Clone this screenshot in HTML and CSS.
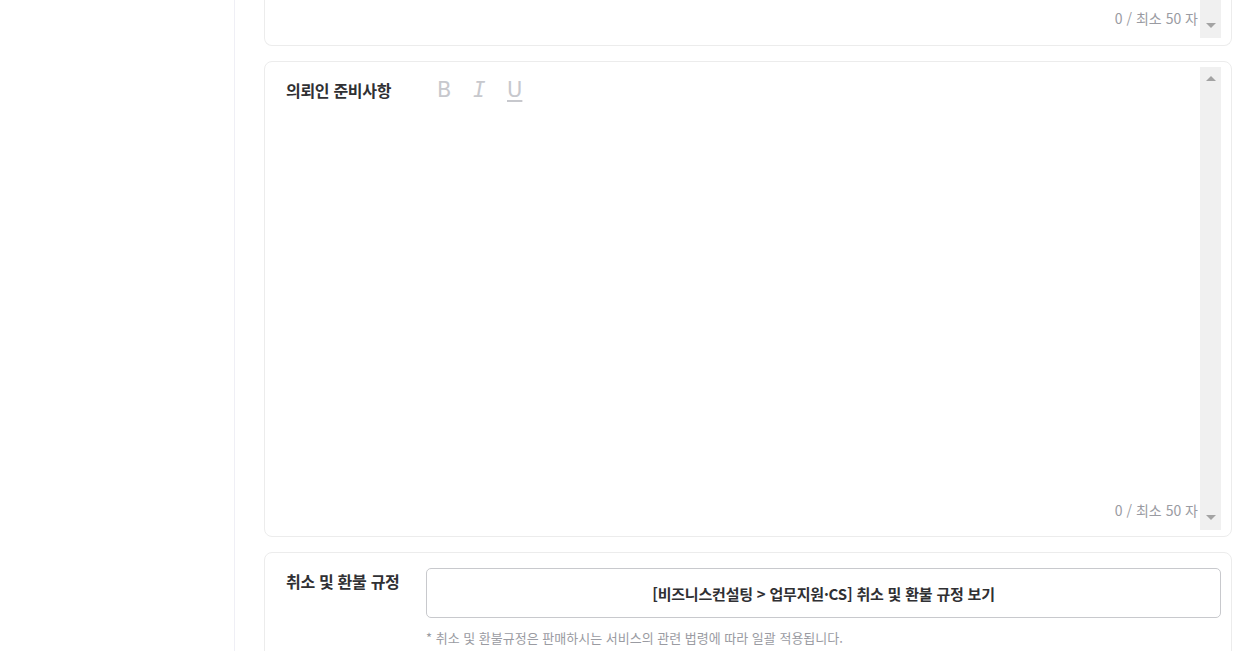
FILE: index.html
```html
<!DOCTYPE html>
<html lang="ko">
<head>
<meta charset="utf-8">
<title>의뢰인 준비사항</title>
<link rel="stylesheet" href="styles.css">
</head>
<body>
<div class="layout">
  <aside class="sidebar"></aside>
  <main class="main">
    <section class="card card-cont">
      <div class="field-row">
        <div class="editor-body editor-short">
          <div class="counter">0 / 최소 50 자</div>
        </div>
        <div class="scrollbar">
          <span class="arrow arrow-down"></span>
        </div>
      </div>
    </section>

    <section class="card card-editor">
      <div class="field-row">
        <div class="label">의뢰인 준비사항</div>
        <div class="editor-body editor-tall">
          <div class="toolbar">
            <span class="tool tool-b">B</span>
            <span class="tool tool-i">I</span>
            <span class="tool tool-u">U</span>
          </div>
          <div class="counter">0 / 최소 50 자</div>
        </div>
        <div class="scrollbar">
          <span class="arrow arrow-up"></span>
          <span class="arrow arrow-down"></span>
        </div>
      </div>
    </section>

    <section class="card card-policy">
      <div class="policy-row">
        <div class="label label-policy">취소 및 환불 규정</div>
        <div class="policy-body">
          <button class="policy-btn" type="button">[비즈니스컨설팅 &gt; 업무지원·CS] 취소 및 환불 규정 보기</button>
          <p class="note">* 취소 및 환불규정은 판매하시는 서비스의 관련 법령에 따라 일괄 적용됩니다.</p>
        </div>
      </div>
    </section>
  </main>
</div>
</body>
</html>
```

FILE: styles.css
```css
* { box-sizing: border-box; }

html, body {
  margin: 0;
  padding: 0;
  background: #ffffff;
  font-family: "Noto Sans CJK KR", "Noto Sans", sans-serif;
  color: #303033;
  overflow: hidden;
}

.layout {
  display: flex;
  min-height: 651px;
}

.sidebar {
  width: 235px;
  flex: 0 0 235px;
  border-right: 1px solid #efeff5;
}

.main {
  flex: 1;
  padding: 0 6px 0 29px;
  display: flex;
  flex-direction: column;
  gap: 15px;
}

.card {
  border: 1px solid #ececec;
  border-radius: 8px;
  background: #fff;
}

.card-cont {
  border-top: none;
  border-top-left-radius: 0;
  border-top-right-radius: 0;
  padding: 0 10px 7px 22px;
}

.card-editor {
  padding: 5px 10px 6px 21px;
}

.field-row {
  display: flex;
}

.label {
  width: 140px;
  flex: 0 0 140px;
  font-size: 16px;
  font-weight: 700;
  line-height: 22px;
  color: #303033;
  letter-spacing: -0.3px;
}

.card-editor .label {
  margin-top: 12px;
}

.editor-body {
  flex: 1;
  display: flex;
  flex-direction: column;
  justify-content: space-between;
}

.editor-short { height: 38px; justify-content: flex-end; }
.editor-tall { height: 463px; }

.toolbar {
  display: flex;
  align-items: center;
  margin-top: 11px;
  padding-left: 11px;
  height: 24px;
}

.tool {
  color: #c7c8cd;
  line-height: 24px;
  width: 35px;
  font-family: "DejaVu Sans", sans-serif;
  font-size: 21px;
}

.tool-b {
  width: 36px;
}

.tool-i {
  font-family: "DejaVu Sans Mono", monospace;
  font-style: italic;
  font-size: 21px;
  width: 34px;
}

.tool-u {
  text-decoration: underline;
  text-decoration-thickness: 2px;
  text-underline-offset: 3px;
}

.counter {
  align-self: flex-end;
  font-size: 14px;
  line-height: 20px;
  color: #9a9ba2;
  margin: 0 2px 10px 0;
}

.scrollbar {
  width: 21px;
  flex: 0 0 21px;
  background: #f0f0f0;
  display: flex;
  flex-direction: column;
  justify-content: space-between;
  align-items: center;
}

.card-cont .scrollbar { justify-content: flex-end; }

.arrow {
  width: 0;
  height: 0;
  border-left: 5px solid transparent;
  border-right: 5px solid transparent;
}

.arrow-up {
  border-bottom: 5px solid #a3a3a3;
  margin-top: 9px;
}

.arrow-down {
  border-top: 5px solid #a3a3a3;
  margin-bottom: 10px;
}

.card-policy {
  padding: 15px 10px 20px 21px;
  flex: 1;
  border-bottom-left-radius: 0;
  border-bottom-right-radius: 0;
}

.policy-row {
  display: flex;
}

.label-policy {
  margin-top: 2px;
}

.policy-body {
  flex: 1;
}

.policy-btn {
  display: block;
  width: 100%;
  height: 50px;
  border: 1px solid #c8c9cd;
  border-radius: 5px;
  background: #fff;
  font-family: "Noto Sans CJK KR", "Noto Sans", sans-serif;
  font-size: 15px;
  font-weight: 700;
  color: #303033;
  letter-spacing: -0.2px;
  cursor: pointer;
  padding: 0;
}

.note {
  margin: 10px 0 0 0;
  font-size: 13px;
  line-height: 20px;
  color: #9a9ba2;
}
```
